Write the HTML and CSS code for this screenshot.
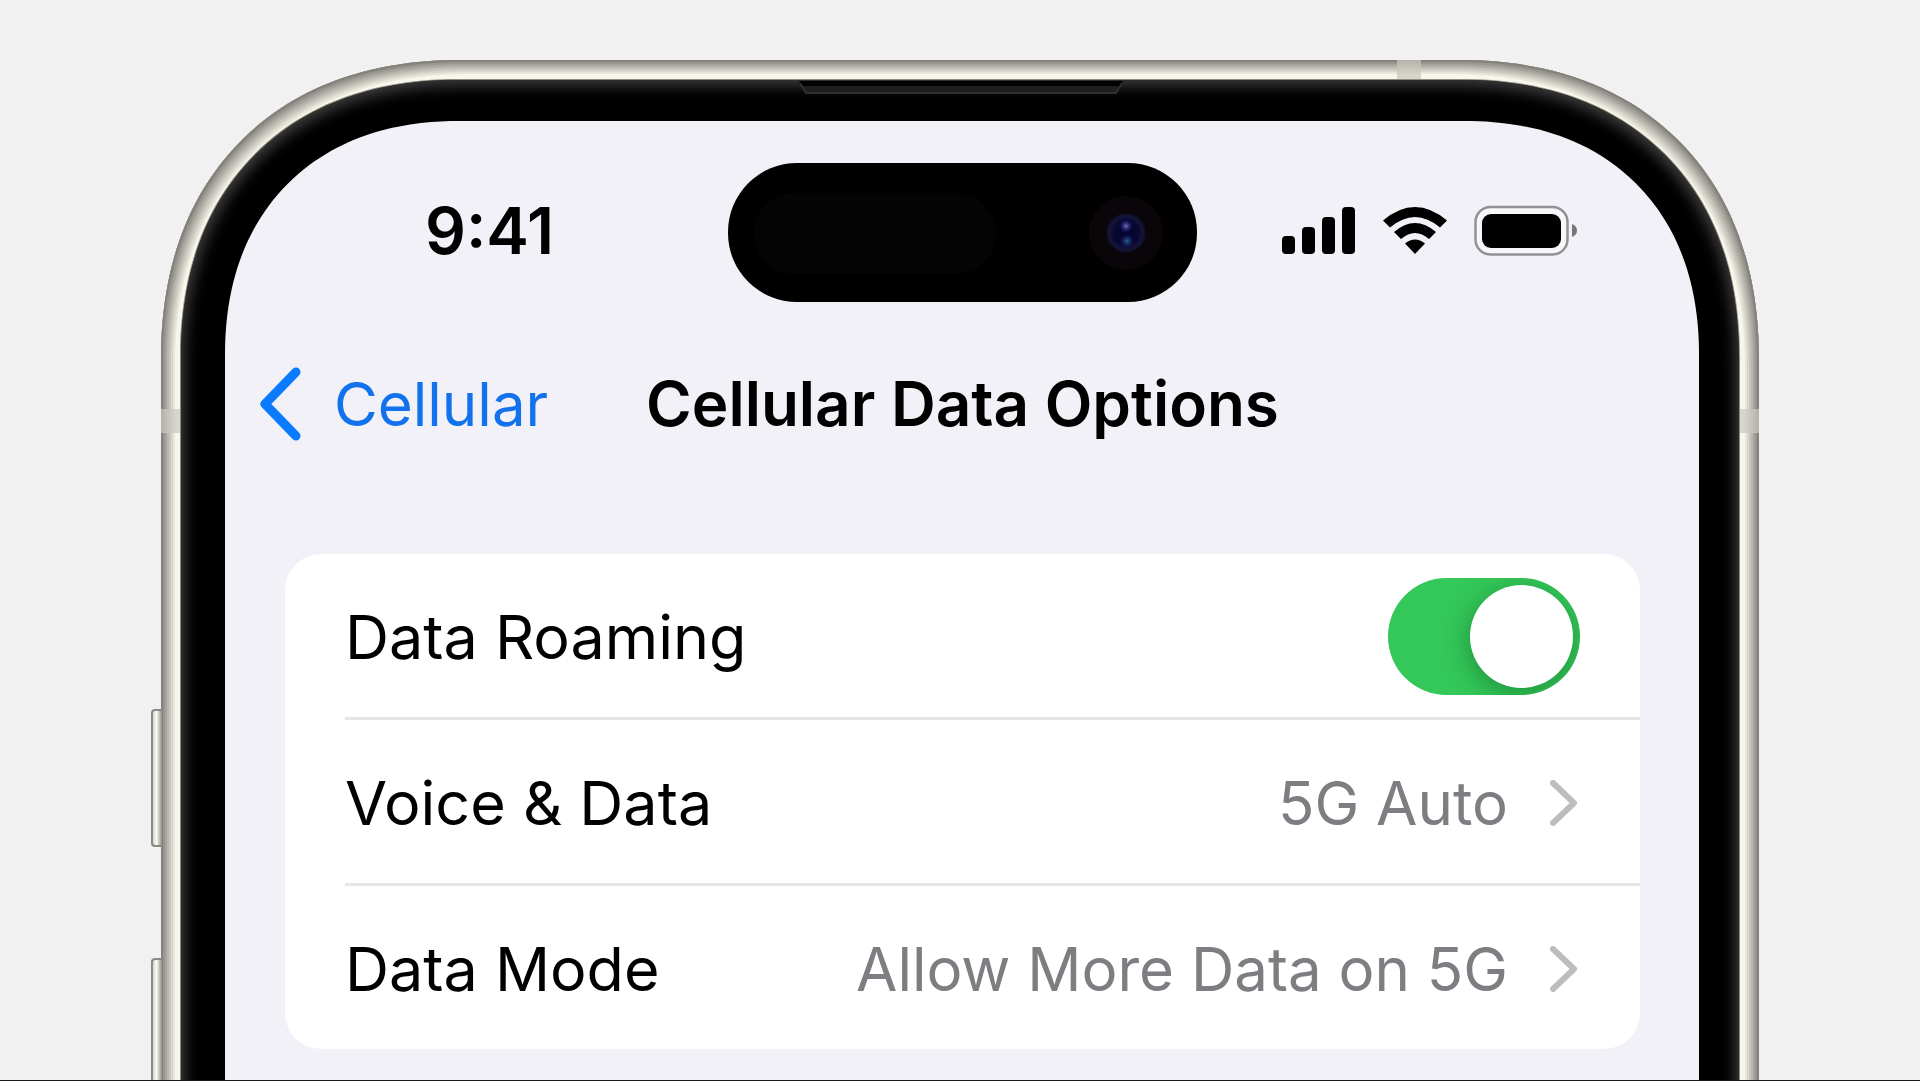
FILE: index.html
```html
<!DOCTYPE html>
<html lang="en">
<head>
<meta charset="utf-8">
<title>Cellular Data Options</title>
<link rel="stylesheet" href="styles.css">
</head>
<body>
<div class="stage">
  <div class="phone">
    <span class="side-button side-button-up"></span>
    <span class="side-button side-button-down"></span>
    <span class="band band-top"></span>
    <span class="band band-left"></span>
    <span class="band band-right"></span>
    <div class="bezel">
      <svg class="earpiece" viewBox="0 0 324 14" aria-hidden="true">
        <path d="M0 0H324L317 12H7Z" fill="#000"/>
        <path d="M3 5H321L317 12H7Z" fill="#1f1f1f"/>
        <path d="M1 2L7 12H317L323 2" fill="none" stroke="#303030" stroke-width="2"/>
      </svg>
      <main class="screen">
        <header class="status">
          <time class="clock">9:41</time>
          <svg class="island" viewBox="0 0 469 139" aria-hidden="true">
            <defs>
              <radialGradient id="lens">
                <stop offset="0" stop-color="#050530"/>
                <stop offset=".6" stop-color="#070730"/>
                <stop offset=".85" stop-color="#15163a"/>
                <stop offset="1" stop-color="#0a0816"/>
              </radialGradient>
              <radialGradient id="glint">
                <stop offset="0" stop-color="#7470c0"/>
                <stop offset="1" stop-color="#1a1880" stop-opacity="0"/>
              </radialGradient>
              <radialGradient id="glow">
                <stop offset="0" stop-color="#1b6a86"/>
                <stop offset="1" stop-color="#2a1880" stop-opacity="0"/>
              </radialGradient>
            </defs>
            <rect width="469" height="139" rx="69" fill="#000"/>
            <rect x="26" y="30" width="242" height="81" rx="40" fill="#040404"/>
            <circle cx="398" cy="70" r="37" fill="#090509"/>
            <circle cx="398" cy="70" r="20" fill="url(#lens)"/>
            <circle cx="398" cy="63" r="7" fill="url(#glint)"/>
            <circle cx="399" cy="78" r="7" fill="url(#glow)"/>
          </svg>
          <div class="indicators">
            <svg class="signal" viewBox="0 0 74 51" role="img" aria-label="Signal">
              <rect x="0" y="31" width="13" height="18" rx="4"/>
              <rect x="20" y="22" width="13" height="27" rx="4"/>
              <rect x="40" y="12" width="13" height="37" rx="4"/>
              <rect x="60" y="2" width="13" height="47" rx="4"/>
            </svg>
            <svg class="wifi" viewBox="0 0 64 51" role="img" aria-label="Wi-Fi">
              <path d="M0 15.500Q32-11.500 64 15.500L57 22.500Q32 1.500 7 22.500Z"/>
              <path d="M11 27Q32 9 53 27L46 34Q32 22 18 34Z"/>
              <path d="M22 38.500Q32 30.500 42 38.500L32 49Z"/>
            </svg>
            <svg class="battery" viewBox="0 0 104 51" role="img" aria-label="Battery">
              <rect x="1.500" y="2" width="92" height="47.500" rx="15" fill="#f7f7f9" stroke="#929296" stroke-width="2.500"/>
              <rect x="8" y="9" width="79" height="34" rx="9"/>
              <path d="M98 19Q103 21 103 25.500T98 32Z" fill="#77777a"/>
            </svg>
          </div>
        </header>
        <nav class="nav">
          <a class="back" href="#">
            <svg class="back-icon" viewBox="0 0 42 74" aria-hidden="true"><path d="M37 5L6 37L37 69"/></svg>
            Cellular
          </a>
          <h1 class="title">Cellular Data Options</h1>
        </nav>
        <ul class="card">
          <li class="row">
            <label class="label" for="roaming">Data Roaming</label>
            <input class="switch" id="roaming" type="checkbox" role="switch" checked>
          </li>
          <li class="row">
            <a class="link" href="#">
              <span class="label">Voice &amp; Data</span>
              <span class="value">5G Auto</span>
              <svg class="chevron" viewBox="0 0 28 46" aria-hidden="true"><path d="M3 3L24 23L3 43"/></svg>
            </a>
          </li>
          <li class="row">
            <a class="link" href="#">
              <span class="label">Data Mode</span>
              <span class="value">Allow More Data on 5G</span>
              <svg class="chevron" viewBox="0 0 28 46" aria-hidden="true"><path d="M3 3L24 23L3 43"/></svg>
            </a>
          </li>
        </ul>
      </main>
    </div>
  </div>
</div>
</body>
</html>
```
FILE: styles.css
```css
* {
  box-sizing: border-box;
}

body {
  margin: 0;
  background: #f1f1f1;
  color: #000;
  font-family: Inter, "Liberation Sans", sans-serif;
  font-size: 60px;
  line-height: 72px;
}

.stage {
  display: flex;
  min-height: 100vh;
  padding: 60px 161px 0;
  overflow: hidden;
  border-bottom: 1px solid #1c1c1e;
}

/* Titanium frame: shading runs from grey outside to cream inside.
   The lower end runs on past the bottom of the stage. */
.phone {
  position: relative;
  display: flex;
  flex: 1;
  margin-bottom: -40px;
  padding: 20px 20px 0;
  border-radius: 274px 274px 0 0;
  background: #f8f5ea;
  box-shadow:
    inset 0 0 0 2px #85827c,
    inset 0 0 0 4px #989590,
    inset 0 0 0 6px #a8a59f,
    inset 0 0 0 8px #b8b5ae,
    inset 0 0 0 10px #c8c5bd,
    inset 0 0 0 12px #d8d5cc,
    inset 0 0 0 14px #e8e5da;
}

.bezel {
  position: relative;
  display: flex;
  flex: 1;
  padding: 41px 40px 0 44px;
  border-radius: 254px 254px 0 0;
  background: #000;
  box-shadow: 0 0 0 1px #8e8b82, inset 0 2px 14px 4px #3c3c3c;
}

.screen {
  flex: 1;
  padding: 42px 59px 31px 60px;
  border-radius: 212px 212px 0 0;
  background: #f2f1f7;
}

@supports (corner-shape: superellipse(1.2)) {
  .phone,
  .bezel,
  .screen {
    corner-shape: superellipse(1.15);
  }

  .phone {
    border-radius: 300px 300px 0 0;
  }

  .bezel {
    border-radius: 278px 278px 0 0;
  }

  .screen {
    border-radius: 234px 234px 0 0;
  }
}

.earpiece {
  position: absolute;
  top: 1px;
  left: calc(50% - 161px);
  width: 324px;
  height: 14px;
}

.side-button {
  position: absolute;
  left: -10px;
  width: 11px;
  border: 2px solid #8b8982;
  border-right: 0;
  border-radius: 4px 0 0 4px;
  background: linear-gradient(90deg, #d8d6d0, #fbfaf6 40%, #8f8c85);
}

.side-button-up {
  top: 649px;
  height: 138px;
}

.side-button-down {
  top: 898px;
  bottom: 0;
  border-bottom: 0;
  border-radius: 4px 0 0 0;
}

.band {
  position: absolute;
  background: #c9c7be;
  opacity: .7;
}

.band-top {
  top: 0;
  right: 338px;
  width: 24px;
  height: 19px;
}

.band-left,
.band-right {
  top: 349px;
  width: 19px;
  height: 24px;
}

.band-left {
  left: 0;
}

.band-right {
  right: 0;
}

.status {
  display: grid;
  grid-template-columns: 1fr 469px 1fr;
  align-items: center;
}

.clock {
  padding: 0 34px 4px 0;
  font-size: 64px;
  font-weight: 600;
  text-align: center;
}

.island {
  width: 469px;
  height: 139px;
}

.indicators {
  display: flex;
  gap: 27px;
  justify-content: flex-end;
  padding: 0 62px 4px 0;
}

.indicators svg {
  height: 51px;
}

.signal {
  width: 74px;
}

.wifi {
  width: 64px;
}

.battery {
  width: 104px;
}

.nav {
  display: grid;
  grid-template-columns: 1fr auto 1fr;
  align-items: center;
  height: 100px;
  margin: 52px -26px 100px;
}

.back {
  display: flex;
  align-items: center;
  gap: 33px;
  color: #1271ec;
  text-decoration: none;
}

.back-icon {
  width: 42px;
  height: 74px;
  fill: none;
  stroke: #0a7aff;
  stroke-width: 9;
  stroke-linecap: round;
  stroke-linejoin: round;
}

.title {
  margin: 0;
  font-size: 62px;
  font-weight: 600;
  line-height: 72px;
}

.card {
  margin: 0;
  padding: 0 0 0 60px;
  border-radius: 36px;
  background: #fff;
  list-style: none;
}

.row {
  display: flex;
  align-items: center;
  height: 166px;
  padding: 2px 60px 0 0;
  border-bottom: 3px solid #e6e6e8;
}

.row:last-child {
  height: 163px;
  border-bottom: 0;
}

.link {
  display: flex;
  flex: 1;
  align-items: center;
  color: inherit;
  text-decoration: none;
}

.label {
  flex: 1;
  font-size: 61px;
}

.value {
  color: #7d7d82;
}

.chevron {
  width: 28px;
  height: 46px;
  margin: 0 2px 0 42px;
  fill: none;
  stroke: #bdbdc0;
  stroke-width: 6;
  stroke-linecap: round;
  stroke-linejoin: round;
}

.switch {
  display: flex;
  align-items: center;
  justify-content: flex-end;
  width: 192px;
  height: 117px;
  margin: 0;
  padding: 7px;
  overflow: hidden;
  border-radius: 59px;
  background: #34c759;
  appearance: none;
}

.switch::before {
  width: 103px;
  height: 103px;
  border-radius: 50%;
  background: #fff;
  box-shadow: 0 6px 24px 2px rgb(0 80 20 / 40%);
  content: "";
}
```
